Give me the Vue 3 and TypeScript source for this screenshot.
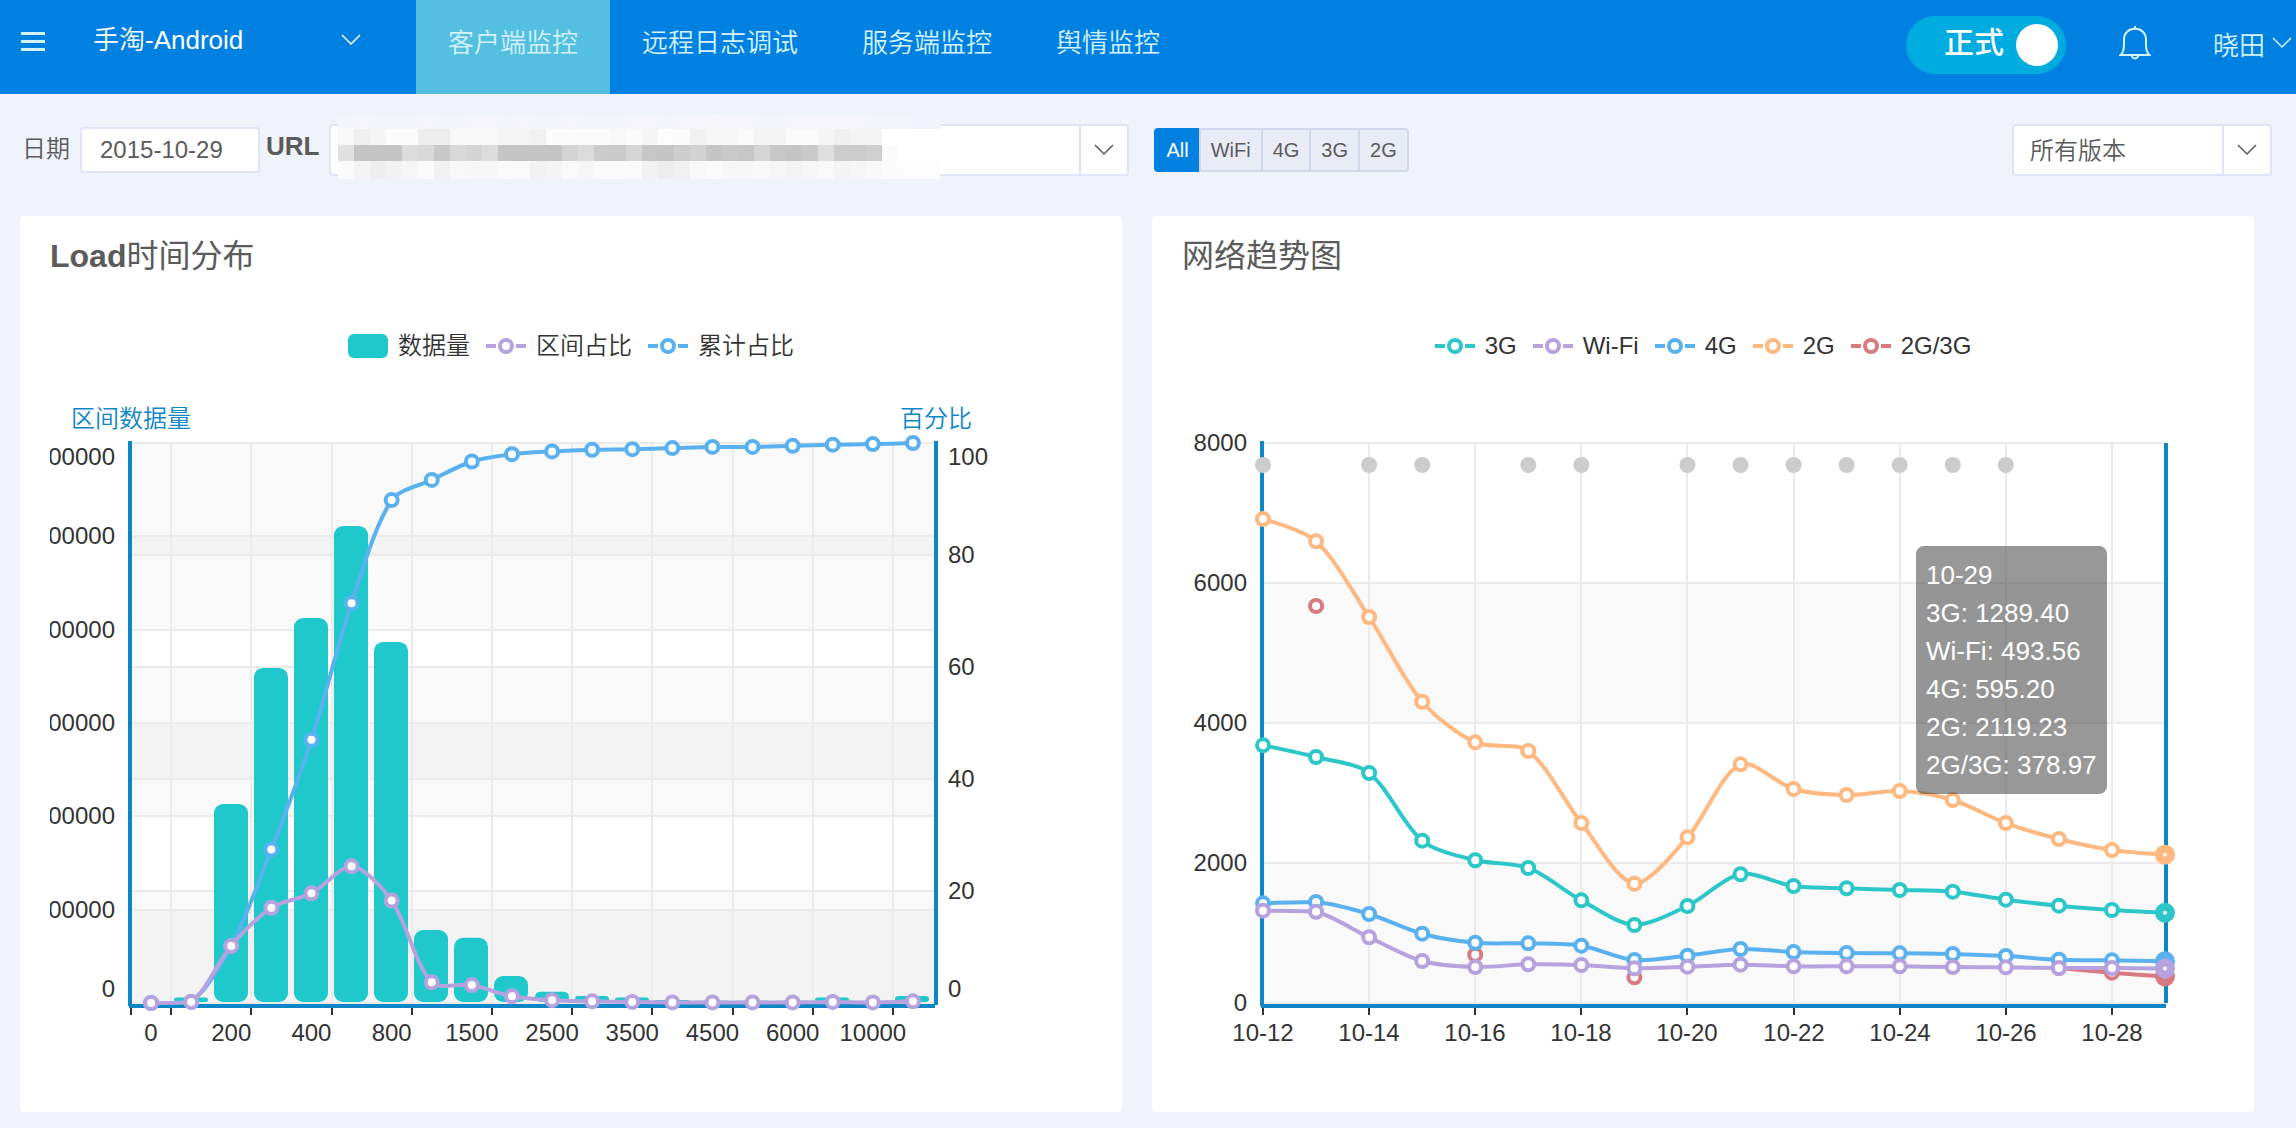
<script setup lang="ts">
import { computed, ref } from 'vue'

interface Point { x: number; y: number }
interface Series { name: string; color: string; data: (number | null)[] }

const navItems = ['客户端监控', '远程日志调试', '服务端监控', '舆情监控']
const activeNav = ref('客户端监控')
const date = ref('2015-10-29')
const networks = ['All', 'WiFi', '4G', '3G', '2G']
const network = ref('All')
const online = ref(true)

// Masked URL: one grey level per tile, four rows of tiles
const maskRows = [
  { y: 0, h: 14, tiles: 'f4f5f4f4f4f5f4f4f5f5f4f5f4f4f5f4f4f4f5f5f4f5f5f6f5f5f4f4f5f5f5f5f5f4f4f4f3f3' },
  { y: 14, h: 16, tiles: 'f8eff5fbfbededf8f8f8f5f5f0fbfbfbfbf8faf5fcfbf1f6f6faf3f3fafaf5eff4f4ffffffff' },
  { y: 30, h: 16, tiles: 'e0c5c5c5dcd9c8d8d4dcc5c5c5c5d4dbcbcad6c6c5cdd2c5c9c7d5c7c5cadecccccffbffffff' },
  { y: 46, h: 18, tiles: 'faf4eef2f6faf2f8f7f7faf9f2f4f9f6fafaf9f2edf0f8faf7f7f8f6f3f6f9f4f6f8fbfcfcfc' },
]
const maskTiles = maskRows.flatMap((row, r) =>
  (row.tiles.match(/../g) ?? []).map((v, i) => ({ x: i * 16, y: row.y, h: row.h, fill: `#${v}${v}${r === 0 ? 'fb' : v}` })),
)

const BLUE = '#5ab1ef'
const PURPLE = '#b6a2de'
const TEAL = '#2ec7c9'

const top = 51
const bottom = 611
const plotHeight = bottom - top

/** Smooth bezier through the points, control points kept inside their bounds. */
function smoothPath(pts: Point[]): string {
  if (pts.length < 2) return ''
  const ys = pts.map(p => p.y)
  const lo = Math.min(...ys)
  const hi = Math.max(...ys)
  const clamp = (v: number) => Math.min(hi, Math.max(lo, v))
  const cps: Point[] = []
  pts.forEach((p, i) => {
    if (i === 0 || i === pts.length - 1) {
      cps.push(p)
      return
    }
    const a = pts[i - 1]
    const b = pts[i + 1]
    const vx = (b.x - a.x) * 0.3
    const vy = (b.y - a.y) * 0.3
    const d0 = Math.hypot(p.x - a.x, p.y - a.y)
    const d1 = Math.hypot(p.x - b.x, p.y - b.y)
    const s = d0 + d1
    cps.push({ x: p.x - (vx * d0) / s, y: clamp(p.y - (vy * d0) / s) })
    cps.push({ x: p.x + (vx * d1) / s, y: clamp(p.y + (vy * d1) / s) })
  })
  let d = `M${pts[0].x} ${pts[0].y}`
  for (let i = 0; i < pts.length - 1; i++) {
    const c1 = cps[i * 2]
    const c2 = cps[i * 2 + 1]
    d += `C${c1.x} ${c1.y} ${c2.x} ${c2.y} ${pts[i + 1].x} ${pts[i + 1].y}`
  }
  return d
}

// Load time distribution
const loadLeft = 111
const loadRight = 915
const step = 40.1
const counts = [0, 6000, 213200, 359000, 412500, 511000, 386800, 78200, 69900, 28900, 12000, 7500, 5900, 3200, 2500, 2500, 2500, 5900, 2100, 7500]
const share = [0, 0.2, 10.2, 17, 19.6, 24.4, 18.3, 3.7, 3.2, 1.2, 0.5, 0.3, 0.2, 0.1, 0.1, 0.1, 0.1, 0.2, 0.1, 0.3]
const total = [0, 0.2, 10.2, 27.4, 47, 71.4, 89.8, 93.4, 96.7, 98, 98.5, 98.8, 98.9, 99.1, 99.3, 99.3, 99.5, 99.7, 99.8, 100]
const loadLabels = ['0', '200', '400', '800', '1500', '2500', '3500', '4500', '6000', '10000']
const loadTicks = [0, 1, 3, 5, 7, 9, 11, 13, 15, 17, 19].map(i => Math.round(loadLeft + step * i))
const centre = (i: number) => loadLeft + step * (i + 0.5)
const bars = counts.map((c, i) => {
  const h = (c / 600000) * plotHeight
  return { x: Math.floor(centre(i)) - 17, y: bottom - h, h: Math.max(0, h - 1), r: Math.min(9, h / 2) }
})
const percentPoints = (values: number[]): Point[] =>
  values.map((v, i) => ({ x: centre(i), y: bottom - (v / 100) * plotHeight }))
const loadLines = [
  { color: BLUE, pts: percentPoints(total) },
  { color: PURPLE, pts: percentPoints(share) },
]
const sixths = [0, 1, 2, 3, 4, 5, 6].map(i => Math.round(top + (plotHeight / 6) * i))
const fifths = [0, 1, 2, 3, 4, 5].map(i => top + (plotHeight / 5) * i)
// The outermost labels sit inside the plot rather than on its edge
const labelY = (y: number) => (y === top ? y + 14 : y === bottom ? y - 14 : y)

// Network trend
const trendLeft = 111
const trendRight = 1013
const dayStep = (trendRight - trendLeft) / 17
const trend: Series[] = [
  { name: '3G', color: TEAL, data: [3681, 3514, 3286, 2319, 2039, 1929, 1467, 1114, 1386, 1839, 1671, 1639, 1614, 1590, 1476, 1390, 1329, 1289.4] },
  { name: 'Wi-Fi', color: PURPLE, data: [1319, 1304, 939, 600, 514, 553, 543, 496, 519, 547, 524, 524, 524, 514, 510, 500, 500, 493.56] },
  { name: '4G', color: BLUE, data: [1424, 1443, 1271, 990, 861, 853, 819, 614, 676, 771, 729, 714, 710, 700, 671, 619, 610, 595.2] },
  { name: '2G', color: '#ffb980', data: [6914, 6596, 5514, 4304, 3724, 3600, 2571, 1704, 2367, 3410, 3057, 2971, 3029, 2900, 2571, 2343, 2186, 2119.23] },
  { name: '2G/3G', color: '#d87a80', data: [null, 5671, null, null, 690, null, null, 367, null, null, null, null, null, null, null, 500, 433, 378.97] },
]
const trendLines = [...trend].reverse().map(s => {
  const runs: Point[][] = [[]]
  s.data.forEach((v, i) => {
    if (v === null) runs.push([])
    else runs[runs.length - 1].push({ x: trendLeft + dayStep * i, y: bottom - (v / 8000) * plotHeight })
  })
  return { name: s.name, color: s.color, runs: runs.filter(r => r.length > 0) }
})
const trendTicks = [0, 2, 4, 6, 8, 10, 12, 14, 16].map(i => ({ x: Math.round(trendLeft + dayStep * i), label: `10-${12 + i}` }))
const quarters = [0, 1, 2, 3, 4].map(i => top + (plotHeight / 4) * i)
const emptyDays = [0, 2, 3, 5, 6, 8, 9, 10, 11, 12, 13, 14].map(i => trendLeft + dayStep * i)
const endPoints = trendLines.map(l => {
  const run = l.runs[l.runs.length - 1]
  return { color: l.color, p: run[run.length - 1] }
})
const tooltipRows = computed(() => trend.map(s => `${s.name}: ${(s.data[17] ?? 0).toFixed(2)}`))
</script>

<template>
  <div class="page">
    <header class="topbar">
      <button class="menu" type="button" aria-label="菜单"><i></i><i></i><i></i></button>
      <div class="app-picker">
        <select aria-label="应用"><option>手淘-Android</option></select>
        <svg class="chevron" viewBox="0 0 20 12"><path d="M1 1l9 9 9-9" /></svg>
      </div>
      <nav>
        <a v-for="item in navItems" :key="item" href="#" :class="{ active: item === activeNav }" @click.prevent="activeNav = item">{{ item }}</a>
      </nav>
      <label class="toggle">
        <input v-model="online" type="checkbox">
        <span>正式</span>
        <i></i>
      </label>
      <button class="bell" type="button" aria-label="通知">
        <svg viewBox="0 0 32 34">
          <path d="M1.500 29H30.500C27.500 26.500 27 24 27 19V13.500C27 7 22.500 2.800 16 2.800S5 7 5 13.500V19C5 24 4.500 26.500 1.500 29Z" />
          <path d="M16 0V2.500M12.800 29.500A3.200 3 0 0 0 19.200 29.500" />
        </svg>
      </button>
      <button class="user" type="button">
        晓田
        <svg class="chevron" viewBox="0 0 20 12"><path d="M1 1l9 9 9-9" /></svg>
      </button>
    </header>

    <form class="filters" @submit.prevent>
      <label class="field-name" for="date">日期</label>
      <input id="date" v-model="date" class="date" type="text">
      <label class="field-name url-name" for="url">URL</label>
      <div class="dropdown url">
        <select id="url"><option value=""></option></select>
        <span class="arrow"><svg class="chevron" viewBox="0 0 20 12"><path d="M1 1l9 9 9-9" /></svg></span>
        <svg class="mask" viewBox="0 0 602 64" aria-hidden="true">
          <rect v-for="(t, i) in maskTiles" :key="i" :x="t.x" :y="t.y" width="16" :height="t.h" :fill="t.fill" />
        </svg>
      </div>
      <div class="segments">
        <button v-for="n in networks" :key="n" type="button" :class="{ on: n === network }" @click="network = n">{{ n }}</button>
      </div>
      <div class="dropdown version">
        <select aria-label="版本"><option>所有版本</option></select>
        <span class="arrow"><svg class="chevron" viewBox="0 0 20 12"><path d="M1 1l9 9 9-9" /></svg></span>
      </div>
    </form>

    <main>
      <section class="card">
        <h2><b>Load</b>时间分布</h2>
        <ul class="legend">
          <li><span class="swatch"></span>数据量</li>
          <li v-for="l in [{ n: '区间占比', c: PURPLE }, { n: '累计占比', c: BLUE }]" :key="l.n">
            <svg class="symbol" viewBox="0 0 40 24" :stroke="l.c"><path d="M0 12h10M30 12h10" /><circle cx="20" cy="12" r="6" /></svg>{{ l.n }}
          </li>
        </ul>
        <div class="chart">
          <svg viewBox="0 0 1102 720">
            <clipPath id="canvas"><rect x="30" y="0" width="1042" height="720" /></clipPath>
            <g class="band">
              <rect v-for="i in [1, 3, 5]" :key="'a' + i" :x="loadLeft" :width="loadRight - loadLeft" :y="sixths[i]" :height="sixths[i + 1] - sixths[i]" />
              <rect v-for="i in [0, 2, 4]" :key="'b' + i" :x="loadLeft" :width="loadRight - loadLeft" :y="fifths[i]" :height="fifths[i + 1] - fifths[i]" />
            </g>
            <g class="grid">
              <path v-for="(y, i) in [...sixths, ...fifths]" :key="i" :d="`M${loadLeft} ${y}H${loadRight}`" />
              <path v-for="x in loadTicks.slice(1)" :key="x" :d="`M${x} ${top}V${bottom}`" />
            </g>
            <g class="ticks"><path v-for="x in loadTicks" :key="x" :d="`M${x} 614V623`" /></g>
            <g class="axis">
              <path :d="`M110 ${top - 2}V614`" /><path :d="`M916 ${top - 2}V613`" /><path d="M109 614H915" />
            </g>
            <g fill="#1fc8cb">
              <rect v-for="(b, i) in bars" :key="i" :x="b.x" :y="b.y" width="34" :height="b.h" :rx="b.r" />
            </g>
            <g v-for="l in loadLines" :key="l.color" class="line" :stroke="l.color">
              <path :d="smoothPath(l.pts)" />
              <circle v-for="(p, i) in l.pts" :key="i" :cx="p.x" :cy="p.y" r="6" />
            </g>
            <g class="labels" text-anchor="middle">
              <text v-for="(t, i) in loadLabels" :key="t" :x="centre(i * 2)" y="649">{{ t }}</text>
            </g>
            <g class="labels" text-anchor="end" clip-path="url(#canvas)">
              <text v-for="(y, i) in sixths" :key="y" x="95" :y="labelY(y) + 8">{{ i === 6 ? '0' : '00000' }}</text>
            </g>
            <g class="labels">
              <text v-for="(y, i) in fifths" :key="y" x="928" :y="labelY(y) + 8">{{ 100 - i * 20 }}</text>
            </g>
            <g class="labels name" text-anchor="middle">
              <text x="111" y="35">区间数据量</text>
              <text x="916" y="35">百分比</text>
            </g>
          </svg>
        </div>
      </section>

      <section class="card">
        <h2>网络趋势图</h2>
        <ul class="legend">
          <li v-for="s in trend" :key="s.name">
            <svg class="symbol" viewBox="0 0 40 24" :stroke="s.color"><path d="M0 12h10M30 12h10" /><circle cx="20" cy="12" r="6" /></svg>{{ s.name }}
          </li>
        </ul>
        <div class="chart">
          <svg viewBox="0 0 1102 720">
            <g class="band">
              <rect v-for="i in [1, 3]" :key="i" :x="trendLeft" :width="trendRight - trendLeft" :y="quarters[i]" :height="quarters[i + 1] - quarters[i]" />
            </g>
            <g class="grid">
              <path v-for="y in quarters" :key="y" :d="`M${trendLeft} ${y}H${trendRight}`" />
              <path v-for="t in trendTicks.slice(1)" :key="t.x" :d="`M${t.x} ${top}V${bottom}`" />
            </g>
            <g class="ticks"><path v-for="t in trendTicks" :key="t.x" :d="`M${t.x} 614V623`" /></g>
            <g class="axis">
              <path :d="`M110 ${top - 2}V614`" /><path :d="`M1014 ${top}V611`" /><path d="M109 614H1014" />
            </g>
            <g fill="#ccc"><circle v-for="x in emptyDays" :key="x" :cx="x" cy="73" r="8" /></g>
            <g v-for="l in trendLines" :key="l.name" class="line" :stroke="l.color">
              <template v-for="(run, r) in l.runs" :key="r">
                <path :d="smoothPath(run)" />
                <circle v-for="(p, i) in run" :key="i" :cx="p.x" :cy="p.y" r="6" />
              </template>
            </g>
            <g v-for="e in endPoints" :key="e.color">
              <circle :cx="e.p.x" :cy="e.p.y" r="10" :fill="e.color" />
              <circle :cx="e.p.x" :cy="e.p.y" r="2" fill="#fff" />
            </g>
            <g class="labels" text-anchor="middle">
              <text v-for="t in trendTicks" :key="t.x" :x="t.x" y="649">{{ t.label }}</text>
            </g>
            <g class="labels" text-anchor="end">
              <text v-for="(y, i) in quarters" :key="y" x="95" :y="y + 8">{{ 8000 - i * 2000 }}</text>
            </g>
          </svg>
          <div class="tooltip">
            <div>10-29</div>
            <div v-for="row in tooltipRows" :key="row">{{ row }}</div>
          </div>
        </div>
      </section>
    </main>
  </div>
</template>

<style>
body {
  background: #f0f3f9;
}
</style>

<style scoped>
.page,
.page button,
.page input,
.page select {
  font-family: "Liberation Sans", "Noto Sans CJK SC", sans-serif;
  font-weight: 350;
}

.page {
  padding-bottom: 16px;
  color: #5b5b5b;
  font-size: 24px;
}

.page *,
.page {
  box-sizing: border-box;
}

button {
  padding: 0;
  border: 0;
  background: none;
  color: inherit;
}

select {
  width: 100%;
  height: 100%;
  margin: 0;
  border: 0;
  background: none;
  color: inherit;
  appearance: none;
}

.chevron {
  display: block;
  flex: none;
  width: 20px;
  height: 12px;
  fill: none;
  stroke: currentColor;
  stroke-width: 1.5;
}

.topbar {
  display: flex;
  align-items: center;
  height: 94px;
  padding: 0 4px 8px 21px;
  background: #0080e1;
  color: #d3f3ff;
  font-size: 26px;
}

.menu {
  display: flex;
  flex-direction: column;
  gap: 5px;
  width: 24px;
  padding-bottom: 4px;
}

.menu i {
  height: 3px;
  background: #d3f3ff;
}

.app-picker {
  display: flex;
  align-items: center;
  width: 322px;
  height: 46px;
  margin: 0 1px 6px 48px;
  padding-right: 54px;
  color: #fff;
}

.app-picker select {
  padding: 0;
  font-size: 26px;
}

nav {
  display: flex;
  margin-right: auto;
}

nav a {
  height: 94px;
  margin-bottom: -8px;
  padding: 0 32px;
  color: inherit;
  line-height: 86px;
  text-decoration: none;
  white-space: nowrap;
}

nav a.active {
  background: #54bfe0;
}

.toggle {
  display: flex;
  align-items: center;
  justify-content: space-between;
  width: 160px;
  height: 58px;
  margin: 4px 53px 0 0;
  padding: 0 8px 0 38px;
  border-radius: 29px;
  background: #00abe0;
  color: #fff;
  font-size: 30px;
  font-weight: 500;
  line-height: 54px;
}

.toggle span {
  height: 58px;
}

.toggle input {
  position: absolute;
  opacity: 0;
}

.toggle i {
  width: 42px;
  height: 42px;
  border-radius: 50%;
  background: #fff;
}

.bell svg {
  display: block;
  width: 32px;
  height: 34px;
  fill: none;
  stroke: #d3f3ff;
  stroke-width: 2;
}

.user {
  display: flex;
  align-items: center;
  gap: 7px;
  margin-left: 62px;
  font-size: 26px;
}

.filters {
  display: flex;
  align-items: center;
  padding: 30px 24px 40px 22px;
}

.field-name {
  margin-right: 10px;
  padding-bottom: 8px;
  white-space: nowrap;
}

.url-name {
  margin-left: 6px;
  font-size: 26px;
  font-weight: 700;
}

.date {
  width: 180px;
  height: 46px;
  padding: 0 18px;
  border: 2px solid #e1e4f5;
  border-radius: 4px;
  background: #fff;
  color: inherit;
  font-size: 24px;
}

.dropdown {
  position: relative;
  display: flex;
  height: 52px;
  border: 2px solid #e1e4f5;
  border-radius: 4px;
  background: #fff;
}

.dropdown select {
  padding: 0 16px;
  font-size: 24px;
}

.arrow {
  display: flex;
  align-items: center;
  justify-content: center;
  flex: none;
  width: 48px;
  border-left: 2px solid #e1e4f5;
  pointer-events: none;
}

.url {
  flex: 0 1 800px;
}

.mask {
  position: absolute;
  top: -11px;
  left: 7px;
  width: 602px;
  height: 64px;
  pointer-events: none;
  shape-rendering: crispEdges;
}

.segments {
  display: flex;
  margin-left: 25px;
}

.segments button {
  height: 44px;
  padding: 0 10px;
  border: 2px solid #d3d7ec;
  border-right-width: 0;
  background: #e9ebf7;
  font-size: 20px;
}

.segments button:last-child {
  border-right-width: 2px;
  border-radius: 0 4px 4px 0;
}

.segments .on {
  border-color: #0080e1;
  border-radius: 4px 0 0 4px;
  background: #0080e1;
  color: #fff;
}

.version {
  width: 260px;
  margin-left: auto;
}

main {
  display: grid;
  grid-template-columns: 1fr 1fr;
  gap: 30px;
  padding: 0 42px 0 20px;
}

.card {
  border-radius: 4px;
  background: #fff;
}

h2 {
  margin: 0;
  padding: 20px 30px 0;
  font-size: 32px;
  font-weight: 400;
  line-height: 40px;
}

.legend {
  display: flex;
  justify-content: center;
  gap: 16px;
  margin: 58px 0 0;
  padding: 0;
  color: #333;
  line-height: 24px;
  list-style: none;
}

.legend li {
  display: flex;
  gap: 10px;
}

.swatch {
  width: 40px;
  height: 24px;
  border-radius: 6px;
  background: #1fc8cb;
}

.symbol {
  width: 40px;
  height: 24px;
  fill: #fff;
  stroke-width: 4;
}

.chart {
  position: relative;
  margin-top: 34px;
}

.chart > svg {
  display: block;
  width: 100%;
}

.band {
  fill: rgba(200, 200, 200, 0.1);
}

.grid {
  stroke: #ebebeb;
  stroke-width: 2;
}

.ticks {
  stroke: #333;
  stroke-width: 2;
}

.axis {
  stroke: #0d86c6;
  stroke-width: 4;
}

.line {
  fill: none;
  stroke-width: 4;
}

.line circle {
  fill: #fff;
}

.labels {
  fill: #333;
  font-size: 24px;
}

.labels.name {
  fill: #0d86c6;
}

.tooltip {
  position: absolute;
  top: 154px;
  left: 764px;
  padding: 10px;
  border-radius: 8px;
  background: rgba(50, 50, 50, 0.5);
  color: #fff;
  font-size: 26px;
  line-height: 38px;
  white-space: nowrap;
}
</style>
